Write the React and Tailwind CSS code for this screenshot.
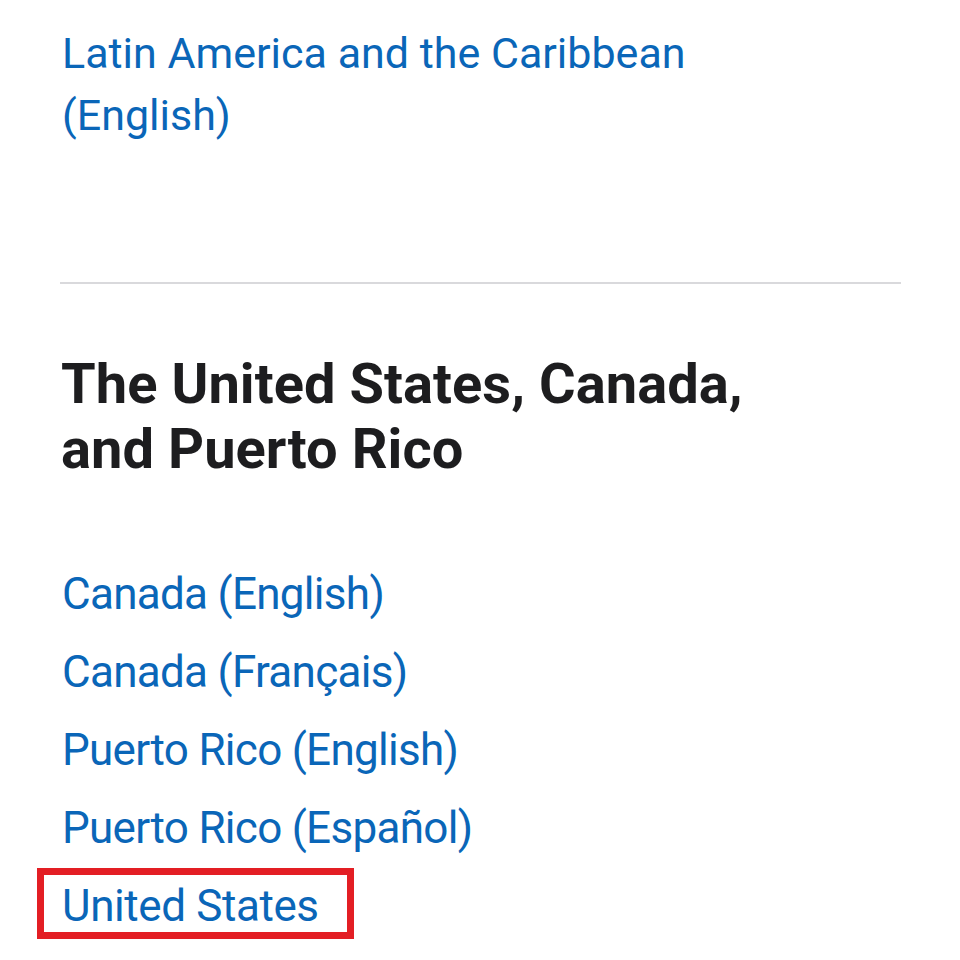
export default function App() {
  const links = [
    'Canada (English)',
    'Canada (Français)',
    'Puerto Rico (English)',
    'Puerto Rico (Español)',
  ];

  return (
    <div
      className="min-h-[960px] bg-white pl-[60px] pr-[59px]"
      style={{ fontFamily: 'Roboto, "Noto Sans", sans-serif' }}>
      <div className="pt-[22px] pl-[2px]">
        <a className="block max-w-[720px] text-[43px] leading-[62px] text-[#0a66b8]">
          Latin America and the Caribbean (English)
        </a>
      </div>

      <div className="mt-[136px] h-[2px] bg-[#d9d9dc]" />

      <h2 className="mt-[68px] pl-[1px] max-w-[780px] text-[56px] leading-[65px] font-bold text-[#1d1d1f] tracking-[0.05px]">
        The United States, Canada, and Puerto Rico
      </h2>

      <ul className="mt-[73px] pl-[2px]">
        {links.map(l => (
          <li key={l} className="text-[44px] leading-[78px] text-[#0a66b8] tracking-[-0.7px]">
            <a>{l}</a>
          </li>
        ))}
        <li className="text-[44px] leading-[78px] text-[#0a66b8] tracking-[-0.4px]">
          <a className="relative inline-block">
            United States
            <span className="absolute left-[-25px] top-[1px] w-[317px] h-[71px] border-[7px] border-[#e31e24]" />
          </a>
        </li>
      </ul>
    </div>
  );
}
